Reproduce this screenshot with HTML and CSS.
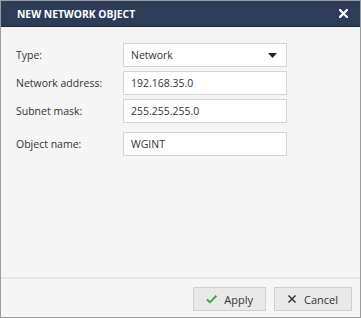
FILE: index.html
```html
<!DOCTYPE html>
<html lang="en">
<head>
  <meta charset="UTF-8">
  <title>New Network Object</title>
  <link rel="stylesheet" href="styles.css">
</head>
<body>
  <div class="dialog">
    <div class="dialog-header">
      <span class="dialog-title">NEW NETWORK OBJECT</span>
      <span class="close-btn">
        <svg width="9" height="9" viewBox="0 0 9 9"><path d="M1 1 L8 8 M8 1 L1 8" stroke="#fff" stroke-width="2.2" stroke-linecap="square"/></svg>
      </span>
    </div>

    <div class="dialog-body">
      <div class="row">
        <label>Type:</label>
        <div class="field select">
          <span>Network</span>
          <svg width="9" height="5" viewBox="0 0 9 5"><path d="M0 0 H9 L4.5 5 Z" fill="#222"/></svg>
        </div>
      </div>
      <div class="row">
        <label>Network address:</label>
        <div class="field">192.168.35.0</div>
      </div>
      <div class="row">
        <label>Subnet mask:</label>
        <div class="field">255.255.255.0</div>
      </div>
      <div class="row row-spaced">
        <label>Object name:</label>
        <div class="field">WGINT</div>
      </div>
    </div>

    <div class="dialog-footer">
      <button class="btn btn-apply">
        <svg width="12" height="10" viewBox="0 0 12 10"><path d="M1 5.5 L4.2 8.5 L11 1.5" stroke="#3aa53a" stroke-width="2" fill="none"/></svg>
        Apply
      </button>
      <button class="btn btn-cancel">
        <svg width="10" height="10" viewBox="0 0 10 10"><path d="M1.5 1.5 L8.5 8.5 M8.5 1.5 L1.5 8.5" stroke="#333" stroke-width="1.5"/></svg>
        Cancel
      </button>
    </div>
  </div>
</body>
</html>
```

FILE: styles.css
```css
* { box-sizing: border-box; }
body {
  margin: 0;
  padding: 0;
  font-family: 'Open Sans', sans-serif;
  font-size: 10.5px;
  color: #333;
  background-color: #fff;
}
.dialog {
  width: 361px;
  height: 318px;
  border: 1px solid #9c9c9c;
  background-color: #f5f5f5;
  display: flex;
  flex-direction: column;
}
/* Header */
.dialog-header {
  height: 26px;
  background-color: #2e3d57;
  border-bottom: 1px solid #1c2536;
  display: flex;
  align-items: center;
  justify-content: space-between;
  padding: 0 12px 0 16px;
  flex-shrink: 0;
}
.dialog-title {
  color: #fff;
  font-weight: 700;
  font-size: 10.3px;
}
.close-btn {
  display: flex;
  align-items: center;
}
/* Skjemadel */
.dialog-body {
  flex: 1;
  padding: 16px 0 0 15px;
}
.row {
  display: flex;
  align-items: center;
  margin-bottom: 4px;
}
.row-spaced { margin-top: 9px; }
label {
  width: 107px;
  color: #333;
}
.field {
  width: 164px;
  height: 24px;
  border: 1px solid #d4d4d4;
  background-color: #fff;
  padding: 0 7px;
  display: flex;
  align-items: center;
  color: #333;
}
.select {
  justify-content: space-between;
  padding-right: 9px;
}
/* Bunnlinje */
.dialog-footer {
  height: 40px;
  border-top: 2px solid #e2e7ec;
  display: flex;
  justify-content: flex-end;
  align-items: flex-start;
  padding: 8px 8px 0 0;
  gap: 8px;
  flex-shrink: 0;
}
.btn {
  height: 24px;
  border: 1px solid #cfcfcf;
  background-color: #e9e9e9;
  font-family: 'Open Sans', sans-serif;
  font-size: 11px;
  color: #333;
  display: flex;
  align-items: center;
  gap: 7px;
  padding: 0 12px;
}
.btn-apply { width: 73px; }
.btn-cancel { width: 78px; }
```
